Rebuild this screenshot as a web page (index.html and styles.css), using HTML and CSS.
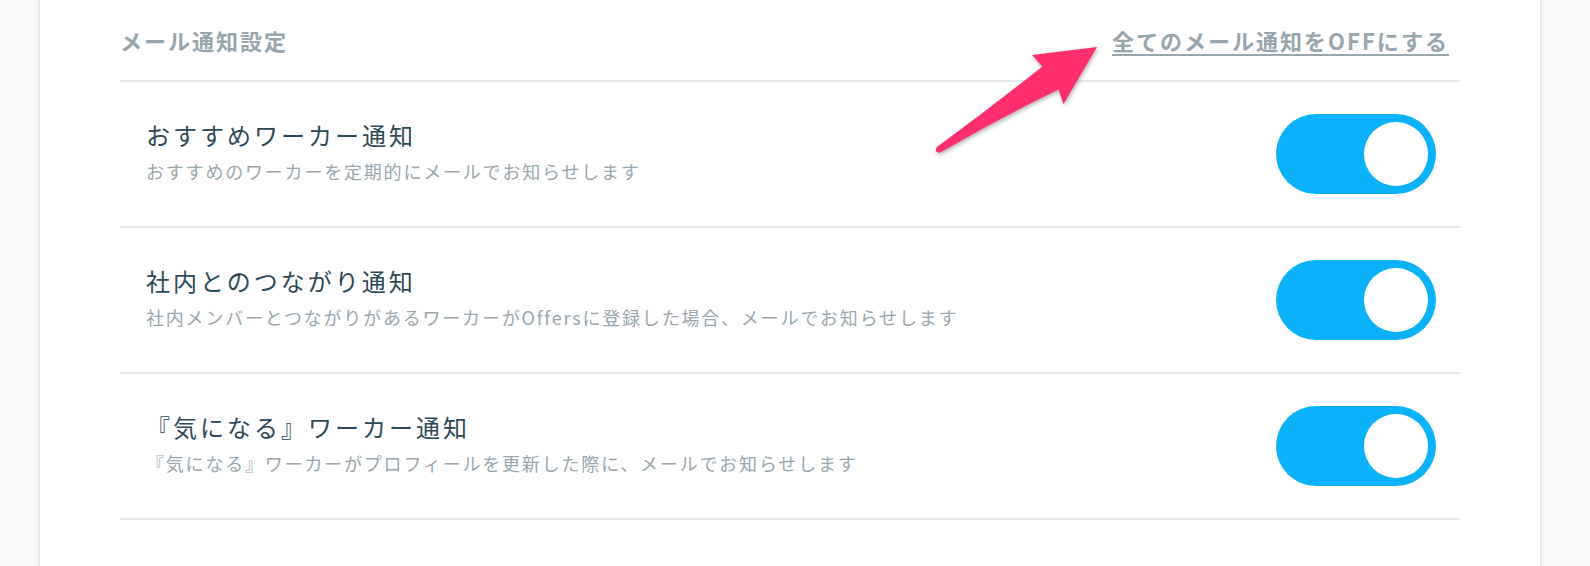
FILE: index.html
```html
<!DOCTYPE html>
<html lang="ja">
<head>
<meta charset="utf-8">
<title>メール通知設定</title>
<link rel="stylesheet" href="styles.css">
</head>
<body>
<div class="card">
  <div class="section-head">
    <h2 class="section-title">メール通知設定</h2>
    <a class="off-link" href="#">全てのメール通知をOFFにする</a>
  </div>
  <ul class="list">
    <li class="row">
      <div class="text">
        <div class="title">おすすめワーカー通知</div>
        <div class="desc">おすすめのワーカーを定期的にメールでお知らせします</div>
      </div>
      <div class="toggle on"><span class="thumb"></span></div>
    </li>
    <li class="row">
      <div class="text">
        <div class="title">社内とのつながり通知</div>
        <div class="desc">社内メンバーとつながりがあるワーカーがOffersに登録した場合、メールでお知らせします</div>
      </div>
      <div class="toggle on"><span class="thumb"></span></div>
    </li>
    <li class="row">
      <div class="text">
        <div class="title">『気になる』ワーカー通知</div>
        <div class="desc">『気になる』ワーカーがプロフィールを更新した際に、メールでお知らせします</div>
      </div>
      <div class="toggle on"><span class="thumb"></span></div>
    </li>
  </ul>
</div>
<svg class="annot-arrow" width="200" height="130" viewBox="0 0 200 130">
  <path d="M177 17 L112 25 L122.5 36.5 Q70 78 17 117 Q14 121 18 122.5 Q20 123 22 121.5 Q80 88 138.5 59.5 L143.5 74 Z" fill="#ff2e6c"/>
</svg>
</body>
</html>
```

FILE: styles.css
```css
* { box-sizing: border-box; }
html, body { margin: 0; padding: 0; }
body {
  background: #f7f9f9;
  font-family: "Noto Sans CJK JP", "Noto Sans", sans-serif;
  height: 566px;
  overflow: hidden;
  position: relative;
}
.card {
  margin-left: 38px;
  width: 1504px;
  height: 566px;
  background: #ffffff;
  border-left: 2px solid #e6e9ec;
  border-right: 2px solid #e6e9ec;
  padding: 0 80px;
}
.section-head {
  height: 80px;
  display: flex;
  align-items: center;
  justify-content: space-between;
}
.section-title {
  margin: 0;
  font-size: 22px;
  font-weight: 700;
  letter-spacing: 2px;
  color: #98a6ad;
}
.off-link {
  font-size: 22px;
  font-weight: 700;
  letter-spacing: 2px;
  color: #98a6ad;
  text-decoration: underline;
  text-underline-offset: 4px;
  text-decoration-thickness: 2px;
  margin-right: 11px;
}
.list {
  list-style: none;
  margin: 0;
  padding: 0;
  border-top: 2px solid #e5e9ec;
}
.row {
  height: 146px;
  border-bottom: 2px solid #e5e9ec;
  display: flex;
  align-items: center;
  justify-content: space-between;
  padding: 0 24px 0 26px;
}
.text {
  display: flex;
  flex-direction: column;
  gap: 4px;
  margin-top: -6px;
}
.title {
  font-size: 24px;
  line-height: 36px;
  letter-spacing: 3px;
  color: #2e4a58;
}
.desc {
  font-size: 18px;
  line-height: 28px;
  letter-spacing: 1.8px;
  color: #9aa7ae;
}
.toggle {
  width: 160px;
  height: 80px;
  border-radius: 40px;
  background: #0bb1f9;
  display: flex;
  align-items: center;
  justify-content: flex-end;
  padding: 0 8px;
}
.thumb {
  width: 64px;
  height: 64px;
  border-radius: 50%;
  background: #ffffff;
}
.annot-arrow {
  position: absolute;
  left: 920px;
  top: 30px;
  filter: drop-shadow(1px 2px 2px rgba(0, 0, 0, 0.3));
}
```
